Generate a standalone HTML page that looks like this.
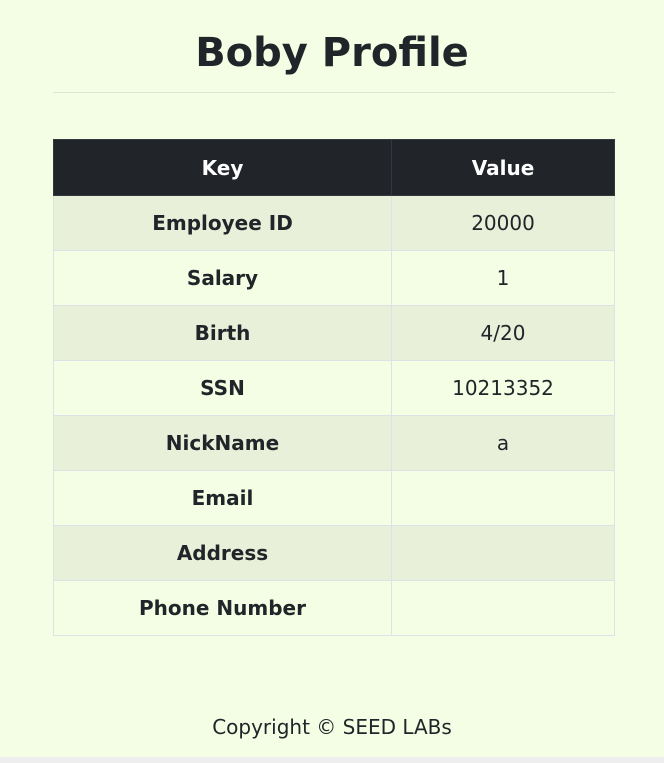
<!DOCTYPE html>
<html><head><style>
html,body{margin:0;padding:0}
body{width:664px;height:763px;background:#f3fee4;font-family:"DejaVu Sans","Liberation Sans",sans-serif;color:#212529;position:relative;overflow:hidden}
h1{position:absolute;top:28px;left:0;width:664px;text-align:center;margin:0;font-size:40px;font-weight:bold;line-height:50px}
.hr{position:absolute;top:92px;left:53px;width:562px;height:1px;background:#dde3d2}
table{position:absolute;top:139px;left:53px;width:562px;border-collapse:collapse;font-size:20px}
td,th{height:54px;text-align:center;border:1px solid #dee2e6;padding:0}
th{background:#212529;color:#fff;border-color:#32383e;height:55px}
td:first-child{font-weight:bold;width:337px}
tr:nth-child(odd) td{background:#e8f0da}
.foot{position:absolute;top:714px;left:0;width:664px;text-align:center;font-size:20px;line-height:26px}
.bar{position:absolute;top:757px;left:0;width:664px;height:6px;background:#eeeeee}
</style></head><body>
<h1>Boby Profile</h1>
<div class="hr"></div>
<table>
<thead><tr><th>Key</th><th>Value</th></tr></thead>
<tbody>
<tr><td>Employee ID</td><td>20000</td></tr>
<tr><td>Salary</td><td>1</td></tr>
<tr><td>Birth</td><td>4/20</td></tr>
<tr><td>SSN</td><td>10213352</td></tr>
<tr><td>NickName</td><td>a</td></tr>
<tr><td>Email</td><td></td></tr>
<tr><td>Address</td><td></td></tr>
<tr><td>Phone Number</td><td></td></tr>
</tbody></table>
<div class="foot">Copyright © SEED LABs</div>
<div class="bar"></div>
</body></html>
